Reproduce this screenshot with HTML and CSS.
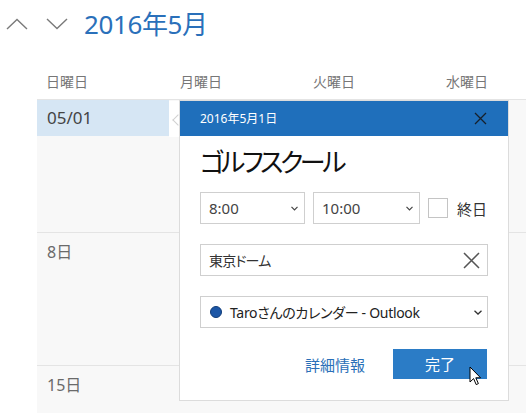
FILE: index.html
```html
<!DOCTYPE html>
<html lang="ja">
<head>
<meta charset="utf-8">
<link rel="stylesheet" href="styles.css">
</head>
<body>
<div class="app">
  <header class="top">
    <svg class="nav" width="22" height="12" viewBox="0 0 22 12"><path d="M1 11 L11 1.5 L21 11" fill="none" stroke="#7a7a7a" stroke-width="1.4"/></svg>
    <svg class="nav" width="22" height="12" viewBox="0 0 22 12"><path d="M1 1 L11 10.5 L21 1" fill="none" stroke="#7a7a7a" stroke-width="1.4"/></svg>
    <h1 class="month">2016年5月</h1>
  </header>
  <div class="dow">
    <span>日曜日</span><span>月曜日</span><span>火曜日</span><span>水曜日</span>
  </div>
  <div class="grid">
    <div class="row">
      <div class="cell first"><div class="today">05/01</div></div>
      <div class="cell"></div>
    </div>
    <div class="row">
      <div class="cell first"><div class="day">8日</div></div>
      <div class="cell"></div>
    </div>
    <div class="row last">
      <div class="cell first"><div class="day">15日</div></div>
      <div class="cell"></div>
    </div>
  </div>

  <div class="popup">
    <div class="pop-head">
      <span class="pop-date">2016年5月1日</span>
      <svg width="13" height="13" viewBox="0 0 13 13"><path d="M1 1 L12 12 M12 1 L1 12" stroke="#16202b" stroke-width="1.3"/></svg>
    </div>
    <div class="pop-body">
      <div class="pop-title">ゴルフスクール</div>
      <div class="time-row">
        <div class="sel w1"><span>8:00</span><svg width="7" height="5" viewBox="0 0 7 5"><path d="M0.5 0.8 L3.5 3.8 L6.5 0.8" fill="none" stroke="#444" stroke-width="1.2"/></svg></div>
        <div class="sel w2"><span>10:00</span><svg width="7" height="5" viewBox="0 0 7 5"><path d="M0.5 0.8 L3.5 3.8 L6.5 0.8" fill="none" stroke="#444" stroke-width="1.2"/></svg></div>
        <div class="check"></div>
        <span class="allday">終日</span>
      </div>
      <div class="field loc">
        <span class="loc-name">東京ドーム</span>
        <svg width="17" height="17" viewBox="0 0 17 17"><path d="M1 1 L16 16 M16 1 L1 16" stroke="#555" stroke-width="1.5"/></svg>
      </div>
      <div class="field cal">
        <span class="dot"></span>
        <span class="cal-name">Taroさんのカレンダー - Outlook</span>
        <svg width="8" height="5" viewBox="0 0 8 5"><path d="M0.5 0.8 L4 4 L7.5 0.8" fill="none" stroke="#333" stroke-width="1.3"/></svg>
      </div>
      <div class="actions">
        <span class="more">詳細情報</span>
        <span class="done">完了</span>
      </div>
    </div>
  </div>

  <svg class="cursor" width="13" height="20" viewBox="0 0 13 20"><path d="M1 1 L1 16 L4.6 12.6 L7.2 18.6 L9.4 17.6 L6.8 11.8 L11.6 11.8 Z" fill="#fff" stroke="#000" stroke-width="1" stroke-linejoin="round"/></svg>
</div>
</body>
</html>
```
FILE: styles.css
```css
* { box-sizing: border-box; margin: 0; padding: 0; }
html, body { width: 526px; height: 413px; overflow: hidden; background: #fff; }
body {
  font-family: "Noto Sans", "Noto Sans CJK JP", sans-serif;
  font-feature-settings: "palt";
  color: #333;
}
.app { position: relative; width: 526px; height: 413px; overflow: hidden; }

.top {
  height: 47px;
  display: flex;
  align-items: center;
  padding-left: 6px;
}
.nav { display: block; margin-right: 18px; }
.nav + .nav { margin-right: 16px; }
.month {
  font-weight: normal;
  font-size: 26px;
  line-height: 34px;
  color: #2a70ba;
  letter-spacing: -0.4px;
}

.dow {
  display: grid;
  grid-template-columns: 134px 133px 133px 1fr;
  padding-left: 46px;
  padding-top: 25px;
  height: 52px;
  font-size: 14px;
  line-height: 20px;
  color: #777;
}

.grid {
  margin-left: 37px;
  border-top: 1px solid #e4e4e4;
  background: #f8f8f8;
  height: 314px;
}
.row {
  display: flex;
  height: 133px;
  border-bottom: 1px solid #e4e4e4;
}
.row.last { border-bottom: none; height: 47px; }
.cell.first { width: 142px; }
.cell { flex: 1; }
.today {
  width: 132px;
  height: 36px;
  background: #d6e6f4;
  padding-left: 10px;
  font-size: 17px;
  line-height: 36px;
  color: #444;
}
.day {
  padding: 9px 0 0 10px;
  font-size: 16px;
  line-height: 20px;
  color: #6a6a6a;
}

.popup {
  position: absolute;
  left: 179px;
  top: 100px;
  width: 330px;
  height: 301px;
  background: #fff;
  border: 1px solid #dcdcdc;
}
.popup::before {
  content: "";
  position: absolute;
  left: -11px;
  top: 0;
  width: 10px;
  height: 36px;
  background: #fff;
}
.popup::after {
  content: "";
  position: absolute;
  left: -6px;
  top: 15px;
  width: 7px;
  height: 7px;
  border-left: 1px solid #d0d0d0;
  border-bottom: 1px solid #d0d0d0;
  transform: rotate(45deg);
}
.pop-head {
  height: 35px;
  background: #1f6fbb;
  display: flex;
  align-items: center;
  justify-content: space-between;
  padding: 0 21px 0 20px;
}
.pop-date { color: #fff; font-size: 12px; line-height: 16px; }
.pop-head svg { display: block; }

.pop-body { padding: 0 20px; }
.pop-title {
  margin-top: 8px;
  font-size: 26px;
  line-height: 36px;
  letter-spacing: -3.4px;
  color: #111;
}
.time-row {
  margin-top: 12px;
  display: flex;
  align-items: center;
  height: 32px;
}
.sel {
  height: 32px;
  border: 1px solid #cfcfcf;
  display: flex;
  align-items: center;
  justify-content: space-between;
  padding: 0 6px 0 8px;
  font-size: 15px;
  color: #444;
}
.sel svg { display: block; }
.w1 { width: 105px; margin-right: 8px; }
.w2 { width: 107px; margin-right: 8px; }
.check {
  width: 20px;
  height: 20px;
  border: 1px solid #c4c4c4;
  margin-right: 9px;
}
.allday { font-size: 15px; color: #333; }

.field {
  height: 32px;
  border: 1px solid #cfcfcf;
  display: flex;
  align-items: center;
  margin-top: 20px;
  font-size: 15px;
  color: #333;
}
.loc { justify-content: space-between; padding: 0 7px 0 8px; }
.loc-name { font-size: 14px; letter-spacing: -0.8px; }
.loc svg { display: block; }
.cal { padding: 0 5px 0 9px; color: #222; }
.dot {
  width: 12px;
  height: 12px;
  border-radius: 50%;
  background: #1c56a6;
  border: 1px solid #0f3b78;
  margin-right: 8px;
}
.cal-name { flex: 1; font-size: 14px; letter-spacing: -0.3px; }
.cal svg { display: block; }

.actions {
  margin-top: 21px;
  display: flex;
  justify-content: flex-end;
  align-items: center;
  gap: 28px;
  padding-right: 1px;
}
.more { color: #2a6fb8; font-size: 15px; }
.done {
  width: 94px;
  height: 30px;
  background: #2b7cc6;
  color: #fff;
  font-size: 15px;
  line-height: 30px;
  text-align: center;
}

.cursor { position: absolute; left: 469px; top: 366px; }
```
